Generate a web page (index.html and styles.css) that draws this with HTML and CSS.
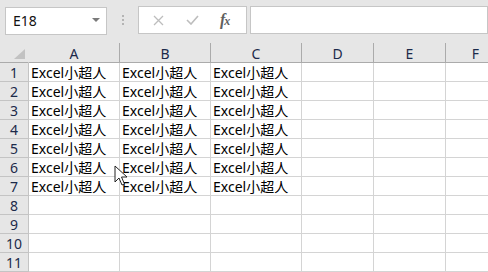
FILE: index.html
```html
<!DOCTYPE html>
<html lang="ja">
<head>
<meta charset="utf-8">
<link rel="stylesheet" href="styles.css">
</head>
<body>
<div class="app">
  <div class="toolbar">
    <div class="namebox">
      <span class="name">E18</span>
      <svg class="dd" width="8" height="4" viewBox="0 0 8 4"><path d="M0 0H8L4 4Z" fill="#7a7a7a"/></svg>
    </div>
    <div class="grip"><i></i><i></i><i></i></div>
    <div class="fbtns">
      <svg class="fb x" width="11" height="11" viewBox="0 0 11 11"><path d="M1 1L10 10M10 1L1 10" stroke="#bdbdbd" stroke-width="1.3" fill="none"/></svg>
      <svg class="fb ok" width="13" height="10" viewBox="0 0 13 10"><path d="M1 5L5 9L12 1" stroke="#bdbdbd" stroke-width="1.6" fill="none"/></svg>
      <span class="fx">f<small>x</small></span>
    </div>
    <div class="finput"></div>
  </div>
  <div class="sheet">
    <div class="hd corner"><svg width="11" height="10" viewBox="0 0 11 10"><path d="M11 0V10H0Z" fill="#c2c2c2"/></svg></div>
    <div class="hd col">A</div>
    <div class="hd col">B</div>
    <div class="hd col">C</div>
    <div class="hd col">D</div>
    <div class="hd col">E</div>
    <div class="hd col last">F</div>

    <div class="hd row">1</div><div class="c">Excel小超人</div><div class="c">Excel小超人</div><div class="c">Excel小超人</div><div class="c"></div><div class="c"></div><div class="c"></div>
    <div class="hd row">2</div><div class="c">Excel小超人</div><div class="c">Excel小超人</div><div class="c">Excel小超人</div><div class="c"></div><div class="c"></div><div class="c"></div>
    <div class="hd row">3</div><div class="c">Excel小超人</div><div class="c">Excel小超人</div><div class="c">Excel小超人</div><div class="c"></div><div class="c"></div><div class="c"></div>
    <div class="hd row">4</div><div class="c">Excel小超人</div><div class="c">Excel小超人</div><div class="c">Excel小超人</div><div class="c"></div><div class="c"></div><div class="c"></div>
    <div class="hd row">5</div><div class="c">Excel小超人</div><div class="c">Excel小超人</div><div class="c">Excel小超人</div><div class="c"></div><div class="c"></div><div class="c"></div>
    <div class="hd row">6</div><div class="c">Excel小超人</div><div class="c">Excel小超人</div><div class="c">Excel小超人</div><div class="c"></div><div class="c"></div><div class="c"></div>
    <div class="hd row">7</div><div class="c">Excel小超人</div><div class="c">Excel小超人</div><div class="c">Excel小超人</div><div class="c"></div><div class="c"></div><div class="c"></div>
    <div class="hd row">8</div><div class="c"></div><div class="c"></div><div class="c"></div><div class="c"></div><div class="c"></div><div class="c"></div>
    <div class="hd row">9</div><div class="c"></div><div class="c"></div><div class="c"></div><div class="c"></div><div class="c"></div><div class="c"></div>
    <div class="hd row">10</div><div class="c"></div><div class="c"></div><div class="c"></div><div class="c"></div><div class="c"></div><div class="c"></div>
    <div class="hd row">11</div><div class="c"></div><div class="c"></div><div class="c"></div><div class="c"></div><div class="c"></div><div class="c"></div>
  </div>
  <svg class="cursor" width="14" height="22" viewBox="0 0 14 22"><path d="M1 1V17L5 13L8 20L10.5 19L7.5 12H13Z" fill="#fff" stroke="#222" stroke-width="1" stroke-linejoin="round"/></svg>
</div>
</body>
</html>
```
FILE: styles.css
```css
html, body {
  margin: 0;
  padding: 0;
  background: #e6e6e6;
  overflow: hidden;
}
.app {
  position: relative;
  width: 488px;
  height: 272px;
  overflow: hidden;
  font-family: "Noto Sans", "Noto Sans CJK JP", sans-serif;
}
.toolbar {
  height: 43px;
  display: flex;
  align-items: flex-start;
  background: #e6e6e6;
}
.namebox {
  margin: 7px 0 0 5px;
  height: 26px;
  background: #fff;
  border: 1px solid #c6c6c6;
  display: flex;
  align-items: center;
  justify-content: space-between;
  padding: 0 6px 0 7px;
  box-sizing: content-box;
  width: 87px;
}
.name {
  font-size: 14px;
  color: #111;
  line-height: 1;
}
.dd { display: block; margin-top: -2px; }
.grip {
  margin: 15px 0 0 0;
  width: 31px;
  display: flex;
  flex-direction: column;
  align-items: center;
  gap: 2px;
}
.grip i {
  display: block;
  width: 2px;
  height: 2px;
  background: #b4b4b4;
}
.fbtns {
  margin-top: 6px;
  height: 26px;
  background: #fff;
  border: 1px solid #c6c6c6;
  display: flex;
  align-items: center;
  padding-left: 14px;
  box-sizing: content-box;
  width: 93px;
}
.fb { display: block; }
.ok { margin-left: 22px; }
.fx {
  margin-left: 21px;
  font-family: "Liberation Serif", serif;
  font-style: italic;
  font-weight: bold;
  font-size: 16px;
  color: #606060;
  letter-spacing: -1px;
  line-height: 1;
}
.fx small { font-size: 12px; }
.finput {
  margin: 6px 0 0 3px;
  flex: 1;
  height: 26px;
  background: #fff;
  border: 1px solid #c6c6c6;
}
.sheet {
  display: grid;
  grid-template-columns: 29px 91px 91px 91px 72px 72px 60px;
  grid-template-rows: 20px repeat(11, 19px);
  background: #fff;
}
.hd {
  background: #e6e6e6;
  box-sizing: border-box;
  font-size: 14px;
  color: #1c2a4a;
  display: flex;
  align-items: center;
  justify-content: center;
}
.corner {
  border-right: 1px solid #e6e6e6;
  border-bottom: 1px solid #ababab;
  align-items: flex-end;
  justify-content: flex-end;
  padding: 0 3px 3px 0;
}
.col {
  border-right: 1px solid #ababab;
  border-bottom: 1px solid #ababab;
  padding-top: 1px;
}
.row {
  border-right: 1px solid #c4c4c4;
  border-bottom: 1px solid #c4c4c4;
  padding-top: 1px;
}
.c {
  box-sizing: border-box;
  border-right: 1px solid #d4d4d4;
  border-bottom: 1px solid #d4d4d4;
  font-size: 14px;
  color: #000;
  padding: 2px 0 0 2px;
  line-height: 16px;
  white-space: nowrap;
  overflow: hidden;
}
.cursor {
  position: absolute;
  left: 114px;
  top: 165px;
}
```
